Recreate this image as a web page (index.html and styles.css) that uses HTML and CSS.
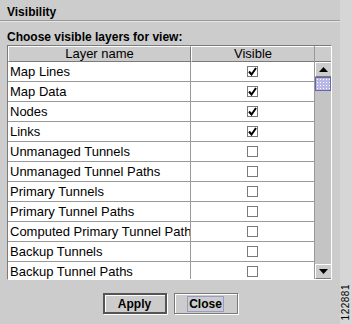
FILE: index.html
```html
<!DOCTYPE html>
<html>
<head>
  <meta charset="UTF-8">
  <title>Visibility</title>
  <link rel="stylesheet" href="styles.css">
</head>
<body>
  <div class="frame">
    <div class="dialog">
      <div class="title">Visibility</div>
      <div class="prompt">Choose visible layers for view:</div>

      <div class="table">
        <div class="grid">
          <div class="row head">
            <div class="cell">Layer name</div>
            <div class="cell">Visible</div>
          </div>
          <div class="row"><div class="cell name">Map Lines</div><div class="cell box"><span class="check on"><svg width="9" height="9" viewBox="0 0 9 9"><path d="M1 4.5 L3.5 7.5 L8 1" fill="none" stroke="#000" stroke-width="2"/></svg></span></div></div>
          <div class="row"><div class="cell name">Map Data</div><div class="cell box"><span class="check on"><svg width="9" height="9" viewBox="0 0 9 9"><path d="M1 4.5 L3.5 7.5 L8 1" fill="none" stroke="#000" stroke-width="2"/></svg></span></div></div>
          <div class="row"><div class="cell name">Nodes</div><div class="cell box"><span class="check on"><svg width="9" height="9" viewBox="0 0 9 9"><path d="M1 4.5 L3.5 7.5 L8 1" fill="none" stroke="#000" stroke-width="2"/></svg></span></div></div>
          <div class="row"><div class="cell name">Links</div><div class="cell box"><span class="check on"><svg width="9" height="9" viewBox="0 0 9 9"><path d="M1 4.5 L3.5 7.5 L8 1" fill="none" stroke="#000" stroke-width="2"/></svg></span></div></div>
          <div class="row"><div class="cell name">Unmanaged Tunnels</div><div class="cell box"><span class="check"></span></div></div>
          <div class="row"><div class="cell name">Unmanaged Tunnel Paths</div><div class="cell box"><span class="check"></span></div></div>
          <div class="row"><div class="cell name">Primary Tunnels</div><div class="cell box"><span class="check"></span></div></div>
          <div class="row"><div class="cell name">Primary Tunnel Paths</div><div class="cell box"><span class="check"></span></div></div>
          <div class="row"><div class="cell name">Computed Primary Tunnel Paths</div><div class="cell box"><span class="check"></span></div></div>
          <div class="row"><div class="cell name">Backup Tunnels</div><div class="cell box"><span class="check"></span></div></div>
          <div class="row"><div class="cell name">Backup Tunnel Paths</div><div class="cell box"><span class="check"></span></div></div>
        </div>

        <div class="scrollbar">
          <div class="corner"></div>
          <div class="arrow"><svg width="9" height="5" viewBox="0 0 9 5"><path d="M0 5 L4.5 0 L9 5 Z" fill="#000"/></svg></div>
          <div class="thumb"></div>
          <div class="track"></div>
          <div class="arrow"><svg width="9" height="5" viewBox="0 0 9 5"><path d="M0 0 L4.5 5 L9 0 Z" fill="#000"/></svg></div>
        </div>
      </div>

      <div class="buttons">
        <button class="btn default">Apply</button>
        <button class="btn"><span class="focus">Close</span></button>
      </div>
    </div>
    <div class="side"><span class="fig">122881</span></div>
  </div>
</body>
</html>
```

FILE: styles.css
```css
body {
  margin: 0;
  background-color: #cccccc;
  font-family: "Liberation Sans", Arial, sans-serif;
  font-size: 12px;
  color: #000;
}

.frame {
  display: flex;
  width: 352px;
  height: 324px;
}

.dialog {
  width: 340px;
  display: flex;
  flex-direction: column;
}

.title {
  font-weight: bold;
  height: 21px;
  line-height: 14px;
  padding: 5px 0 0 7px;
  box-sizing: border-box;
  border-bottom: 1px solid #999999;
  box-shadow: 0 1px 0 #e6e6e6;
}

.prompt {
  font-weight: bold;
  padding: 9px 0 0 7px;
  line-height: 14px;
  height: 24px;
  box-sizing: border-box;
}

.table {
  display: flex;
  margin-left: 7px;
  width: 325px;
  height: 235px;
  box-sizing: border-box;
  border: 1px solid #7a7a7a;
  border-right-color: #ffffff;
  border-bottom-color: #ffffff;
}

.grid {
  flex: 1;
  overflow: hidden;
  background-color: #ffffff;
  font-size: 13px;
}

.row {
  display: grid;
  grid-template-columns: 183px 124px;
  height: 20px;
}

.cell {
  border-right: 1px solid #999999;
  border-bottom: 1px solid #999999;
  box-sizing: border-box;
  line-height: 19px;
  white-space: nowrap;
  overflow: hidden;
}

.name {
  padding-left: 2px;
}

.head {
  height: 16px;
  background-color: #cccccc;
}

.head .cell {
  text-align: center;
  line-height: 14px;
  border-top: 1px solid #ffffff;
  border-left: 1px solid #ffffff;
  border-right: 1px solid #7a7a7a;
  border-bottom: 1px solid #7a7a7a;
}

.box {
  display: flex;
  justify-content: center;
  align-items: center;
}

.check {
  width: 11px;
  height: 11px;
  box-sizing: border-box;
  border: 1px solid #7a7a7a;
  box-shadow: 1px 1px 0 #ffffff;
  background-color: #ffffff;
  display: flex;
  align-items: center;
  justify-content: center;
}

.scrollbar {
  width: 16px;
  display: flex;
  flex-direction: column;
  background-color: #cccccc;
  border-left: 1px solid #999999;
}

.corner {
  height: 16px;
  box-sizing: border-box;
  border-bottom: 1px solid #7a7a7a;
  border-top: 1px solid #ffffff;
}

.arrow {
  height: 15px;
  display: flex;
  align-items: center;
  justify-content: center;
  box-sizing: border-box;
  border-top: 1px solid #ffffff;
  border-left: 1px solid #ffffff;
  border-bottom: 1px solid #7a7a7a;
}

.thumb {
  height: 14px;
  box-sizing: border-box;
  border: 1px solid #6666aa;
  background-color: #b8b8e6;
  background-image: radial-gradient(#ffffff 0.6px, transparent 0.8px);
  background-size: 3px 3px;
}

.track {
  flex: 1;
  background-color: #c4c4c4;
}

.buttons {
  display: flex;
  justify-content: center;
  gap: 7px;
  margin-top: 13px;
}

.btn {
  width: 64px;
  height: 21px;
  padding: 0;
  font-family: inherit;
  font-size: 12px;
  font-weight: bold;
  color: #000;
  background-color: #cccccc;
  border: 1px solid #7a7a7a;
  box-shadow: inset 1px 1px 0 #ffffff, 1px 1px 0 #ffffff;
}

.btn.default {
  border: 2px solid #555555;
}

.focus {
  border: 1px solid #9999cc;
  padding: 0 1px;
}

.side {
  width: 12px;
  background-color: #d6d6d6;
  position: relative;
}

.fig {
  position: absolute;
  left: 0;
  bottom: 4px;
  writing-mode: vertical-rl;
  transform: rotate(180deg);
  font-size: 10px;
  letter-spacing: 0.5px;
  line-height: 12px;
}
```
